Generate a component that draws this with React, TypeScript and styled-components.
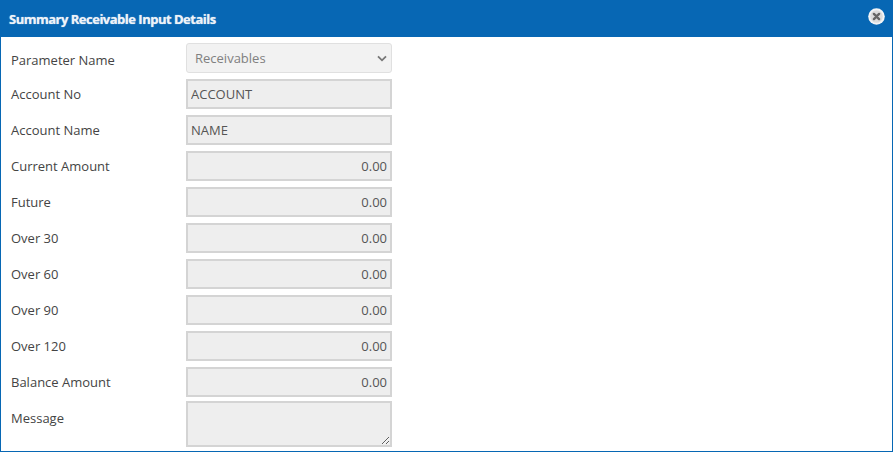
import React from "react";
import styled, { createGlobalStyle } from "styled-components";

const GlobalStyle = createGlobalStyle`
  html, body {
    margin: 0;
    padding: 0;
    background: #fff;
  }
  * {
    box-sizing: border-box;
  }
`;

const Dialog = styled.div`
  width: 893px;
  height: 452px;
  display: flex;
  flex-direction: column;
  border: 1px solid #0767b4;
  border-top: 0;
  background: #fff;
  font-family: "Open Sans", sans-serif;
  overflow: hidden;
`;

const Header = styled.div`
  height: 37px;
  margin: 0 -1px;
  padding: 0 8px 0 9px;
  flex: none;
  display: flex;
  align-items: center;
  justify-content: space-between;
  background: #0767b4;
`;

const Title = styled.h1`
  margin: 0;
  color: #eef3f8;
  font-size: 13px;
  font-weight: 700;
  letter-spacing: -0.5px;
  text-shadow: 0 0 1px rgba(255, 255, 255, 0.7);
`;

const CloseButton = styled.button`
  width: 17px;
  height: 17px;
  margin-bottom: 5px;
  padding: 0;
  border: 0;
  background: none;
  display: block;
`;

const Form = styled.form`
  flex: 1;
  padding: 6px 0 0 10px;
  display: flex;
  flex-direction: column;
`;

const Row = styled.div<{ $tall?: boolean }>`
  height: ${({ $tall }) => ($tall ? "46px" : "30px")};
  margin-bottom: ${({ $tall }) => ($tall ? "0" : "6px")};
  display: grid;
  grid-template-columns: 175px 206px;
  align-items: start;
  &:nth-last-child(2) {
    margin-bottom: 4px;
  }
`;

const Label = styled.label<{ $offset: number }>`
  padding-top: ${({ $offset }) => $offset}px;
  color: #444;
  font-size: 13px;
  line-height: 18px;
`;

const Field = styled.input<{ $numeric?: boolean }>`
  width: 206px;
  height: 30px;
  padding: 0 3px;
  border: 2px solid #d4d4d4;
  border-radius: 0;
  background: #eee;
  color: #555;
  font-family: inherit;
  font-size: 13px;
  text-align: ${({ $numeric }) => ($numeric ? "right" : "left")};
  opacity: 1;
`;

const SelectWrap = styled.div`
  position: relative;
  width: 206px;
  height: 30px;
`;

const Select = styled.select`
  width: 206px;
  height: 30px;
  padding: 0 0 0 8px;
  border: 1px solid #e0e0e0;
  border-radius: 3px;
  background: #f2f2f2;
  color: #808080;
  font-family: inherit;
  font-size: 13px;
  appearance: none;
  opacity: 1;
`;

const Chevron = styled.svg`
  position: absolute;
  top: 12px;
  right: 5px;
  width: 10px;
  height: 7px;
  pointer-events: none;
`;

const MessageBox = styled.textarea`
  display: block;
  width: 206px;
  height: 46px;
  padding: 3px;
  border: 2px solid #d4d4d4;
  border-radius: 0;
  background: #eee;
  color: #555;
  font-family: inherit;
  font-size: 13px;
  resize: vertical;
  opacity: 1;
`;

const textFields = [
  { label: "Account No", value: "ACCOUNT" },
  { label: "Account Name", value: "NAME" },
];

const amountFields = [
  "Current Amount",
  "Future",
  "Over 30",
  "Over 60",
  "Over 90",
  "Over 120",
  "Balance Amount",
];

const App = () => (
  <>
    <GlobalStyle />
    <Dialog>
      <Header>
        <Title>Summary Receivable Input Details</Title>
        <CloseButton type="button" aria-label="Close">
          <svg width="17" height="17" viewBox="0 0 17 17">
            <circle cx="8.5" cy="8.5" r="8.3" fill="#f2f4f6" />
            <circle cx="8.5" cy="8.5" r="6.3" fill="#dcdcdc" />
            <path
              d="M5.9 5.9l5.2 5.2M11.1 5.9l-5.2 5.2"
              stroke="#666"
              strokeWidth="2.4"
              strokeLinecap="round"
            />
          </svg>
        </CloseButton>
      </Header>
      <Form>
        <Row>
          <Label $offset={8}>Parameter Name</Label>
          <SelectWrap>
            <Select disabled defaultValue="Receivables">
              <option>Receivables</option>
            </Select>
            <Chevron viewBox="0 0 10 7">
              <path
                d="M1 1.3l4 4 4-4"
                fill="none"
                stroke="#777"
                strokeWidth="1.8"
              />
            </Chevron>
          </SelectWrap>
        </Row>
        {textFields.map(({ label, value }) => (
          <Row key={label}>
            <Label $offset={6}>{label}</Label>
            <Field readOnly value={value} />
          </Row>
        ))}
        {amountFields.map((label) => (
          <Row key={label}>
            <Label $offset={6}>{label}</Label>
            <Field $numeric readOnly value="0.00" />
          </Row>
        ))}
        <Row $tall>
          <Label $offset={8}>Message</Label>
          <MessageBox readOnly />
        </Row>
      </Form>
    </Dialog>
  </>
);

export default App;
